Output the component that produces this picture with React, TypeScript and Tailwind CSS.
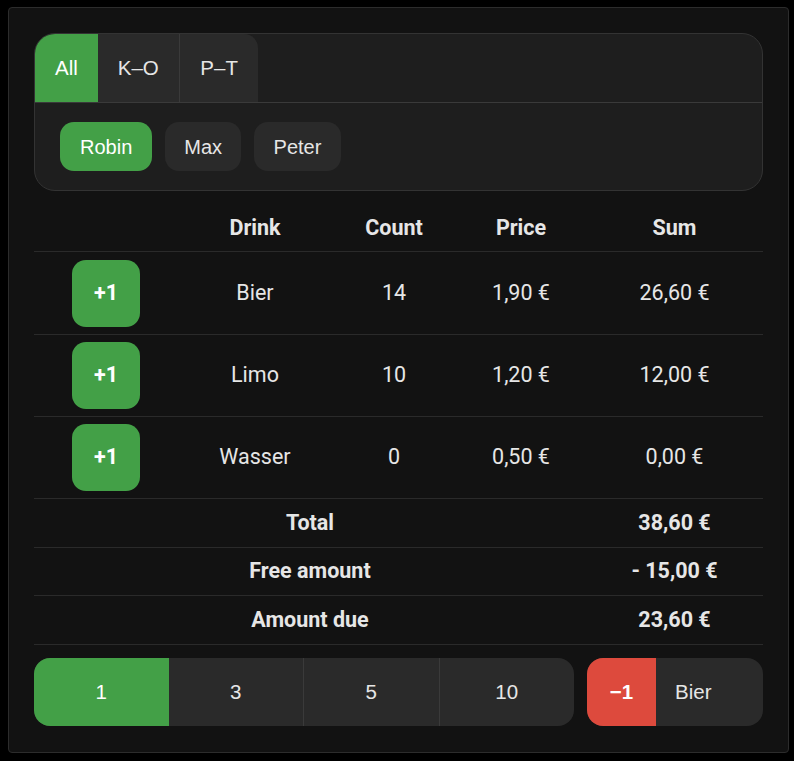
import React from "react";

const drinks = [
  { name: "Bier", count: "14", price: "1,90 €", sum: "26,60 €", h: "h-[83px]" },
  { name: "Limo", count: "10", price: "1,20 €", sum: "12,00 €", h: "h-[82px]" },
  { name: "Wasser", count: "0", price: "0,50 €", sum: "0,00 €", h: "h-[82px]" },
];

const summary = [
  { label: "Total", value: "38,60 €", h: "h-[49px]" },
  { label: "Free amount", value: "- 15,00 €", h: "h-[48px]" },
  { label: "Amount due", value: "23,60 €", h: "h-[49px]" },
];

export default function App() {
  const arial = { fontFamily: '"Liberation Sans", Arial, sans-serif' };
  const roboto = { fontFamily: 'Roboto, "Liberation Sans", sans-serif' };
  return (
    <div className="min-h-[761px] w-[794px] bg-black pl-[8px] pt-[7px]">
      <div className="flex h-[746px] w-[781px] flex-col rounded-[4px] border border-[#2c2c2c] bg-[#121212] px-[25px] pt-[25px]">
        {/* Tabs card */}
        <div
          className="overflow-hidden rounded-[21px] border border-[#333333] bg-[#1e1e1e]"
          style={arial}
        >
          <div className="flex h-[69px] border-b border-[#3a3a3a]">
            <div className="flex items-center bg-[#43a047] px-[20px] text-[20.5px] text-white">
              All
            </div>
            <div className="flex items-center border-r border-[#3a3a3a] bg-[#2a2a2a] px-[20px] text-[20.5px] text-[#e6e6e6]">
              K–O
            </div>
            <div className="flex items-center rounded-tr-[14px] bg-[#2a2a2a] px-[20.5px] text-[20.5px] text-[#e6e6e6]">
              P–T
            </div>
          </div>
          <div className="flex gap-[13px] px-[25px] pb-[19px] pt-[19px]">
            <div className="flex h-[49px] items-center rounded-[14px] bg-[#43a047] px-[20px] text-[20px] text-white">
              Robin
            </div>
            <div className="flex h-[49px] items-center rounded-[14px] bg-[#2a2a2a] px-[19px] text-[20px] text-[#e6e6e6]">
              Max
            </div>
            <div className="flex h-[49px] items-center rounded-[14px] bg-[#2a2a2a] px-[19.5px] text-[20px] text-[#e6e6e6]">
              Peter
            </div>
          </div>
        </div>

        {/* Table */}
        <div className="mt-[14px] text-[21.5px] text-[#e6e6e6]" style={roboto}>
          <div className="grid h-[47px] grid-cols-[144px_154px_124px_130px_177px] items-center border-b border-[#2a2a2a] font-bold">
            <div />
            <div className="text-center">Drink</div>
            <div className="text-center">Count</div>
            <div className="text-center">Price</div>
            <div className="text-center">Sum</div>
          </div>
          {drinks.map((d) => (
            <div
              key={d.name}
              className={`grid ${d.h} grid-cols-[144px_154px_124px_130px_177px] items-center border-b border-[#2a2a2a]`}
            >
              <div className="flex justify-center">
                <div className="flex h-[67px] w-[68px] items-center justify-center rounded-[14px] bg-[#43a047] font-bold text-white">
                  +1
                </div>
              </div>
              <div className="text-center">{d.name}</div>
              <div className="text-center">{d.count}</div>
              <div className="text-center">{d.price}</div>
              <div className="text-center">{d.sum}</div>
            </div>
          ))}
          {summary.map((s) => (
            <div
              key={s.label}
              className={`grid ${s.h} grid-cols-[144px_154px_124px_130px_177px] items-center border-b border-[#2a2a2a] font-bold`}
            >
              <div className="col-span-4 text-center">{s.label}</div>
              <div className="text-center">{s.value}</div>
            </div>
          ))}
        </div>

        {/* Bottom controls */}
        <div className="mt-[13px] flex gap-[13px]" style={arial}>
          <div className="flex h-[68px] flex-1 overflow-hidden rounded-[16px] bg-[#2a2a2a] text-[20.5px] text-[#e6e6e6]">
            <div className="flex flex-1 items-center justify-center bg-[#43a047] text-white">1</div>
            <div className="flex flex-1 items-center justify-center border-r border-[#3a3a3a]">3</div>
            <div className="flex flex-1 items-center justify-center border-r border-[#3a3a3a]">5</div>
            <div className="flex flex-1 items-center justify-center">10</div>
          </div>
          <div className="flex h-[68px] w-[176px] overflow-hidden rounded-[16px] bg-[#2a2a2a] text-[20.5px]">
            <div className="flex w-[69px] items-center justify-center bg-[#dd4a3d] font-bold text-white">
              −1
            </div>
            <div className="flex items-center pl-[19px] text-[#e6e6e6]">Bier</div>
          </div>
        </div>
      </div>
    </div>
  );
}
